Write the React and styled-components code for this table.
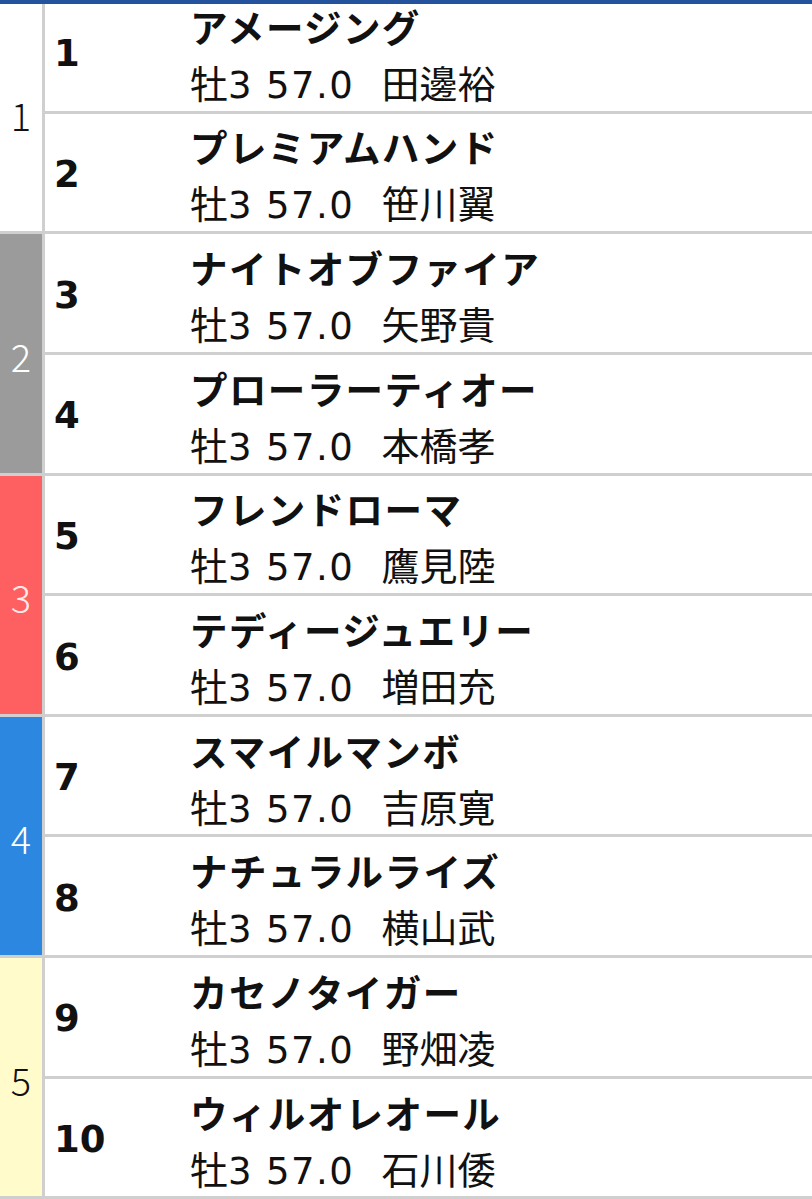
import React from "react";
import styled, { createGlobalStyle } from "styled-components";

const Global = createGlobalStyle`
  html, body { margin: 0; padding: 0; background: #fff; }
  body { font-family: "Noto Sans CJK JP", "Noto Sans", sans-serif; color: #111; }
`;

const Page = styled.div`
  width: 812px;
  height: 1199px;
  overflow: hidden;
  background: #fff;
`;

const TopBar = styled.div`
  position: relative;
  z-index: 1;
  height: 4px;
  background: #24529d;
`;

const Table = styled.div`
  margin-top: -11px;
  display: flex;
  flex-direction: column;
`;

const Frame = styled.div`
  display: flex;
  border-bottom: 3px solid #cfcfcf;
`;

const FrameCell = styled.div`
  width: 45px;
  flex: none;
  border-right: 3px solid #cfcfcf;
  background: ${(p) => p.$bg};
  color: ${(p) => p.$fg};
  display: flex;
  align-items: center;
  justify-content: center;
  font-family: "Noto Sans CJK JP", sans-serif;
  font-size: 38px;
  font-weight: 300;
  padding-top: 4px;
  box-sizing: border-box;
`;

const Horses = styled.div`
  flex: 1;
  display: flex;
  flex-direction: column;
`;

const HorseRow = styled.div`
  height: 117.65px;
  display: flex;
  align-items: center;
  & + & {
    border-top: 3px solid #cfcfcf;
  }
`;

const Num = styled.div`
  width: 136px;
  padding-left: 9px;
  flex: none;
  font-family: "DejaVu Sans", "Noto Sans CJK JP", sans-serif;
  font-size: 37px;
  font-weight: 700;
  padding-top: 4px;
`;

const Info = styled.div`
  display: flex;
  flex-direction: column;
  padding-top: 6px;
`;

const Name = styled.div`
  font-size: 37.5px;
  font-weight: 700;
  line-height: 56px;
  letter-spacing: 1.4px;
  white-space: nowrap;
  margin-top: 2px;
`;

const Meta = styled.div`
  font-family: "DejaVu Sans", "Noto Sans CJK JP", sans-serif;
  font-size: 37px;
  font-weight: 400;
  line-height: 56px;
  white-space: pre;
`;

const Figures = styled.span`
  letter-spacing: 1.4px;
`;

const Jockey = styled.span`
  font-family: "Noto Sans CJK JP", sans-serif;
  font-size: 38px;
  margin-left: 1px;
`;

const Sex = styled.span`
  font-family: "Noto Sans CJK JP", sans-serif;
  font-size: 38px;
`;

const frames = [
  { n: 1, bg: "#ffffff", fg: "#111", horses: [
    { no: 1, name: "アメージング", jockey: "田邊裕" },
    { no: 2, name: "プレミアムハンド", jockey: "笹川翼" },
  ]},
  { n: 2, bg: "#9b9b9b", fg: "#ffffff", horses: [
    { no: 3, name: "ナイトオブファイア", jockey: "矢野貴" },
    { no: 4, name: "プローラーティオー", jockey: "本橋孝" },
  ]},
  { n: 3, bg: "#fe5f60", fg: "#ffeaea", horses: [
    { no: 5, name: "フレンドローマ", jockey: "鷹見陸" },
    { no: 6, name: "テディージュエリー", jockey: "増田充" },
  ]},
  { n: 4, bg: "#2b87df", fg: "#ffffff", horses: [
    { no: 7, name: "スマイルマンボ", jockey: "吉原寛" },
    { no: 8, name: "ナチュラルライズ", jockey: "横山武" },
  ]},
  { n: 5, bg: "#fffbcb", fg: "#111", horses: [
    { no: 9, name: "カセノタイガー", jockey: "野畑凌" },
    { no: 10, name: "ウィルオレオール", jockey: "石川倭" },
  ]},
];

export default function App() {
  return (
    <Page>
      <Global />
      <TopBar />
      <Table>
        {frames.map((f) => (
          <Frame key={f.n}>
            <FrameCell $bg={f.bg} $fg={f.fg}>{f.n}</FrameCell>
            <Horses>
              {f.horses.map((h) => (
                <HorseRow key={h.no}>
                  <Num>{h.no}</Num>
                  <Info>
                    <Name>{h.name}</Name>
                    <Meta>
                      <Sex>牡</Sex><Figures>{"3 57.0  "}</Figures><Jockey>{h.jockey}</Jockey>
                    </Meta>
                  </Info>
                </HorseRow>
              ))}
            </Horses>
          </Frame>
        ))}
      </Table>
    </Page>
  );
}
